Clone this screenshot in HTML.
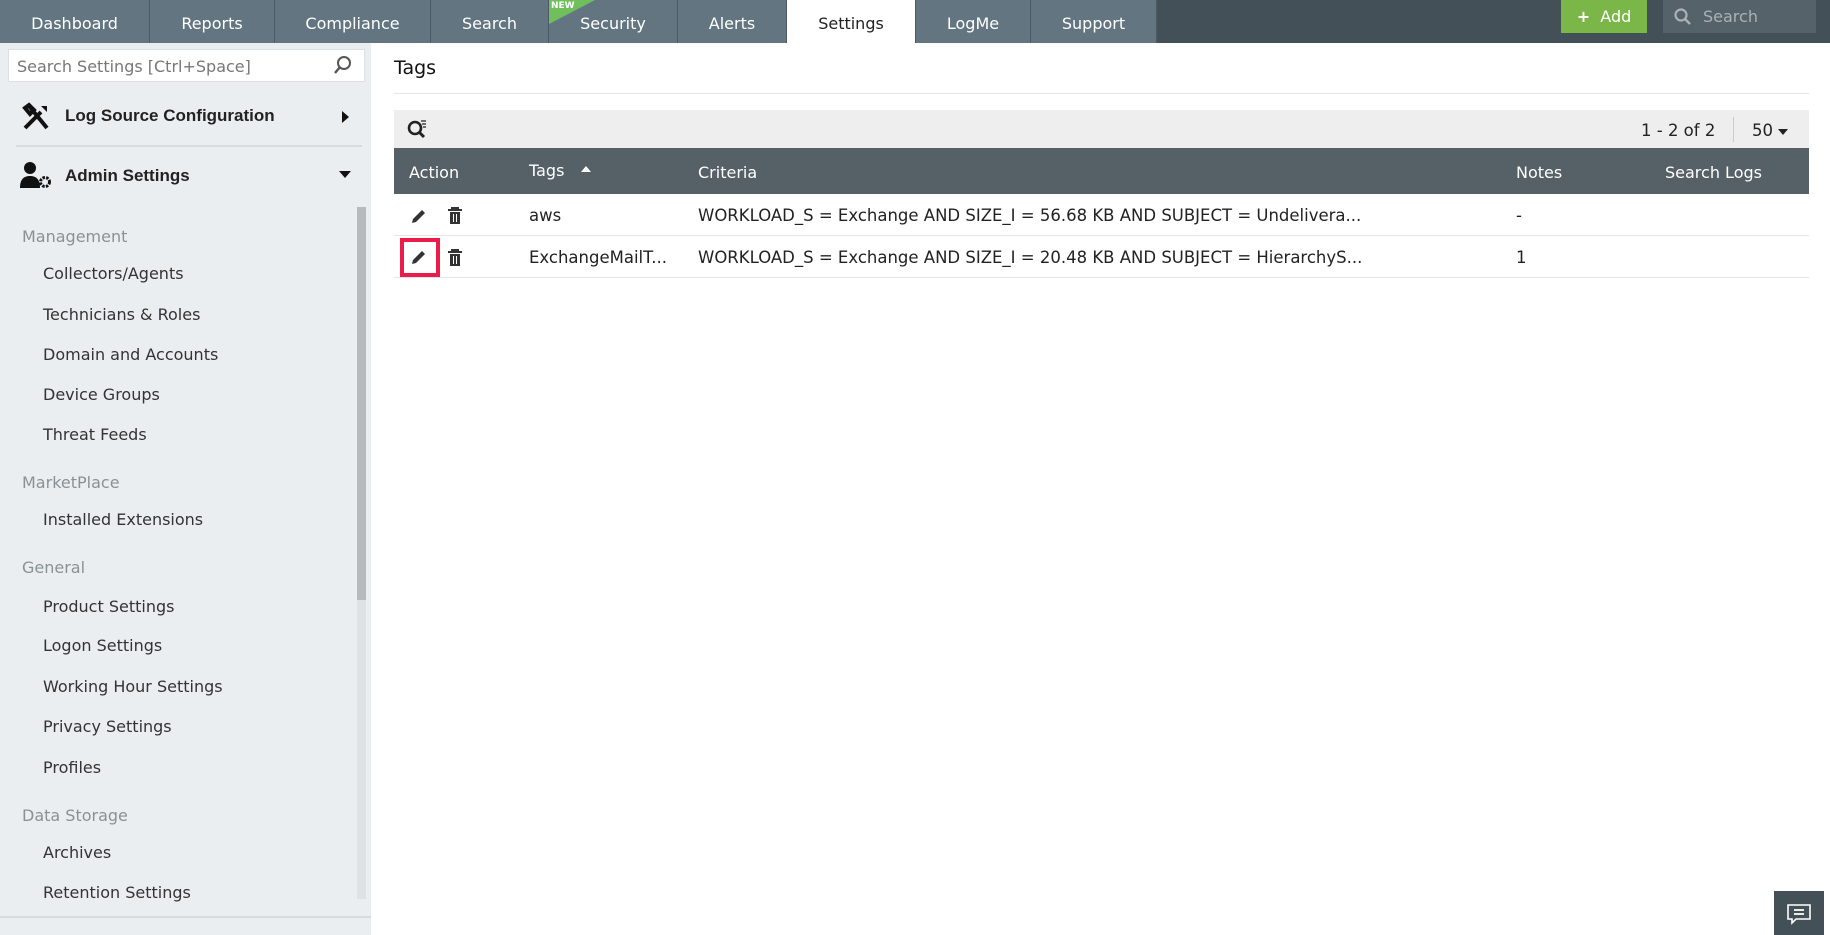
<!DOCTYPE html>
<html><head><meta charset="utf-8"><style>
*{margin:0;padding:0;box-sizing:border-box}
body{width:1830px;height:935px;overflow:hidden;background:#fff;font-family:"DejaVu Sans","Liberation Sans",sans-serif;position:relative;color:#222}
.top{position:absolute;left:0;top:0;width:1830px;height:43px;background:#445058}
.tab{position:absolute;top:0;height:43px;background:#627580;color:#fff;font-size:16px;line-height:47px;text-align:center;border-right:1px solid #4b5a63}
.tab.act{background:#fff;color:#222}
.side{position:absolute;left:0;top:43px;width:371px;height:892px;background:#ebeef0}
.abs{position:absolute;white-space:nowrap}
.hd{color:#222;font-weight:bold;font-family:"Liberation Sans",sans-serif;font-size:17px}
.sec{font-size:16px;color:#8a9196}
.it{font-size:16px;color:#333}
.th{font-size:16px;color:#fff}
.td{font-size:16.5px;color:#222}
</style></head><body>
<div class="top">
<div class="tab" style="left:0;width:150px">Dashboard</div>
<div class="tab" style="left:150px;width:125px">Reports</div>
<div class="tab" style="left:275px;width:156px">Compliance</div>
<div class="tab" style="left:431px;width:118px">Search</div>
<div class="tab" style="left:549px;width:129px">Security</div>
<div class="abs" style="left:549px;top:0;width:0;height:0;border-top:24px solid #6fc05c;border-right:46px solid transparent"></div>
<div class="abs" style="left:551px;top:1px;font-size:9px;color:#fff;font-weight:bold">NEW</div>
<div class="tab" style="left:678px;width:109px">Alerts</div>
<div class="tab act" style="left:787px;width:129px">Settings</div>
<div class="tab" style="left:916px;width:115px">LogMe</div>
<div class="tab" style="left:1031px;width:126px">Support</div>
<div class="abs" style="left:1561px;top:0;width:86px;height:33px;background:#7ab648;color:#fff;font-size:16px;line-height:33px;text-align:center"><b>+</b>&nbsp; Add</div>
<div class="abs" style="left:1663px;top:0;width:153px;height:33px;background:#56626a;color:#a9b1b6;font-size:16px;line-height:33px;padding-left:40px">Search</div>
<svg class="abs" style="left:1673px;top:7px" width="20" height="20" viewBox="0 0 20 20"><circle cx="8" cy="8" r="5.5" fill="none" stroke="#a9b1b6" stroke-width="2.2"/><path d="M12 12l5 5" stroke="#a9b1b6" stroke-width="2.5"/></svg>
</div>
<div class="side">
<div class="abs" style="left:8px;top:6px;width:357px;height:33px;background:#fff;border:1px solid #dde1e3;font-size:16px;color:#777;line-height:33px;padding-left:8px">Search Settings [Ctrl+Space]</div>
<svg class="abs" style="left:333px;top:12px" width="20" height="22" viewBox="0 0 20 22"><circle cx="11" cy="8" r="6" fill="none" stroke="#555" stroke-width="2"/><path d="M7 12l-5 6" stroke="#555" stroke-width="2.4"/></svg>
<svg class="abs" style="left:21px;top:59px" width="30" height="30" viewBox="0 0 30 30"><path d="M4 26L20 10M8 4l18 22M4 6l4-3 5 5-4 4z" stroke="#111" stroke-width="4" fill="none"/><path d="M20 4l6 0 0 6z" fill="#111"/></svg>
<div class="abs hd" style="left:65px;top:63px">Log Source Configuration</div>
<div class="abs" style="left:342px;top:68px;border-left:7px solid #111;border-top:6px solid transparent;border-bottom:6px solid transparent"></div>
<div class="abs" style="left:16px;top:102px;width:346px;height:2px;background:#d7dbdd"></div>
<svg class="abs" style="left:19px;top:118px" width="34" height="28" viewBox="0 0 34 28"><circle cx="11" cy="7" r="6" fill="#111"/><path d="M1 27c0-9 4-12 10-12s10 3 10 12z" fill="#111"/><circle cx="26" cy="21" r="4.5" fill="none" stroke="#111" stroke-width="3" stroke-dasharray="2.5 1.2"/></svg>
<div class="abs hd" style="left:65px;top:123px">Admin Settings</div>
<div class="abs" style="left:339px;top:128px;border-top:7px solid #111;border-left:6px solid transparent;border-right:6px solid transparent"></div>
<div class="abs sec" style="left:22px;top:184px">Management</div>
<div class="abs it" style="left:43px;top:221px">Collectors/Agents</div>
<div class="abs it" style="left:43px;top:262px">Technicians &amp; Roles</div>
<div class="abs it" style="left:43px;top:302px">Domain and Accounts</div>
<div class="abs it" style="left:43px;top:342px">Device Groups</div>
<div class="abs it" style="left:43px;top:382px">Threat Feeds</div>
<div class="abs sec" style="left:22px;top:430px">MarketPlace</div>
<div class="abs it" style="left:43px;top:467px">Installed Extensions</div>
<div class="abs sec" style="left:22px;top:515px">General</div>
<div class="abs it" style="left:43px;top:554px">Product Settings</div>
<div class="abs it" style="left:43px;top:593px">Logon Settings</div>
<div class="abs it" style="left:43px;top:634px">Working Hour Settings</div>
<div class="abs it" style="left:43px;top:674px">Privacy Settings</div>
<div class="abs it" style="left:43px;top:715px">Profiles</div>
<div class="abs sec" style="left:22px;top:763px">Data Storage</div>
<div class="abs it" style="left:43px;top:800px">Archives</div>
<div class="abs it" style="left:43px;top:840px">Retention Settings</div>
<div class="abs" style="left:0;top:873px;width:371px;height:2px;background:#d7dbdd"></div>
<div class="abs" style="left:357px;top:164px;width:9px;height:692px;background:#dfe2e4"></div>
<div class="abs" style="left:357px;top:164px;width:9px;height:393px;background:#b7bbbe"></div>
</div>
<div class="abs" style="left:394px;top:57px;font-size:19px;color:#111">Tags</div>
<div class="abs" style="left:394px;top:93px;width:1415px;height:1px;background:#e3e5e6"></div>
<div class="abs" style="left:394px;top:110px;width:1415px;height:38px;background:#eeeeee"></div>
<svg class="abs" style="left:406px;top:118px" width="24" height="24" viewBox="0 0 24 24"><circle cx="9" cy="10" r="6" fill="none" stroke="#222" stroke-width="2.6"/><path d="M13 14l5 5" stroke="#222" stroke-width="3"/><path d="M15 3h5M16 6h4M17 9h3" stroke="#222" stroke-width="1.2"/></svg>
<div class="abs td" style="left:1641px;top:121px">1 - 2 of 2</div>
<div class="abs" style="left:1733px;top:117px;width:1px;height:25px;background:#d8c9a8"></div>
<div class="abs td" style="left:1752px;top:121px">50</div>
<div class="abs" style="left:1778px;top:129px;border-top:6px solid #222;border-left:5px solid transparent;border-right:5px solid transparent"></div>
<div class="abs" style="left:394px;top:148px;width:1415px;height:46px;background:#566067"></div>
<div class="abs th" style="left:409px;top:163px">Action</div>
<div class="abs th" style="left:529px;top:161px">Tags</div>
<div class="abs" style="left:581px;top:166px;border-bottom:6px solid #fff;border-left:5px solid transparent;border-right:5px solid transparent"></div>
<div class="abs th" style="left:698px;top:163px">Criteria</div>
<div class="abs th" style="left:1516px;top:163px">Notes</div>
<div class="abs th" style="left:1665px;top:163px">Search Logs</div>
<div class="abs" style="left:394px;top:235px;width:1415px;height:1px;background:#e3e5e6"></div>
<div class="abs" style="left:394px;top:277px;width:1415px;height:1px;background:#e3e5e6"></div>
<svg class="abs" style="left:410px;top:207px" width="18" height="18" viewBox="0 0 18 18"><path d="M2 16l1-4 9-9 3 3-9 9z" fill="#333"/></svg>
<svg class="abs" style="left:447px;top:206px" width="16" height="20" viewBox="0 0 16 20"><path d="M1 4h14M5 4V2h6v2" stroke="#333" stroke-width="2" fill="none"/><path d="M3 6h10v12H3z" fill="#333"/><path d="M6.5 8v8M9.5 8v8" stroke="#fff" stroke-width="1"/></svg>
<div class="abs td" style="left:529px;top:206px">aws</div>
<div class="abs td" style="left:698px;top:206px">WORKLOAD_S = Exchange AND SIZE_I = 56.68 KB AND SUBJECT = Undelivera...</div>
<div class="abs td" style="left:1516px;top:206px">-</div>
<div class="abs" style="left:400px;top:238px;width:40px;height:39px;border:4px solid #ec1c4a"></div>
<svg class="abs" style="left:410px;top:248px" width="18" height="18" viewBox="0 0 18 18"><path d="M2 16l1-4 9-9 3 3-9 9z" fill="#333"/></svg>
<svg class="abs" style="left:447px;top:248px" width="16" height="20" viewBox="0 0 16 20"><path d="M1 4h14M5 4V2h6v2" stroke="#333" stroke-width="2" fill="none"/><path d="M3 6h10v12H3z" fill="#333"/><path d="M6.5 8v8M9.5 8v8" stroke="#fff" stroke-width="1"/></svg>
<div class="abs td" style="left:529px;top:248px">ExchangeMailT...</div>
<div class="abs td" style="left:698px;top:248px">WORKLOAD_S = Exchange AND SIZE_I = 20.48 KB AND SUBJECT = HierarchyS...</div>
<div class="abs td" style="left:1516px;top:248px">1</div>
<div class="abs" style="left:1774px;top:891px;width:50px;height:44px;background:#445058"></div>
<svg class="abs" style="left:1786px;top:903px" width="26" height="22" viewBox="0 0 26 22"><path d="M2 2h22v14H10l-4 4v-4H2z" fill="none" stroke="#fff" stroke-width="1.6"/><path d="M8 7h10M8 11h10" stroke="#fff" stroke-width="1.8"/></svg>
</body></html>
